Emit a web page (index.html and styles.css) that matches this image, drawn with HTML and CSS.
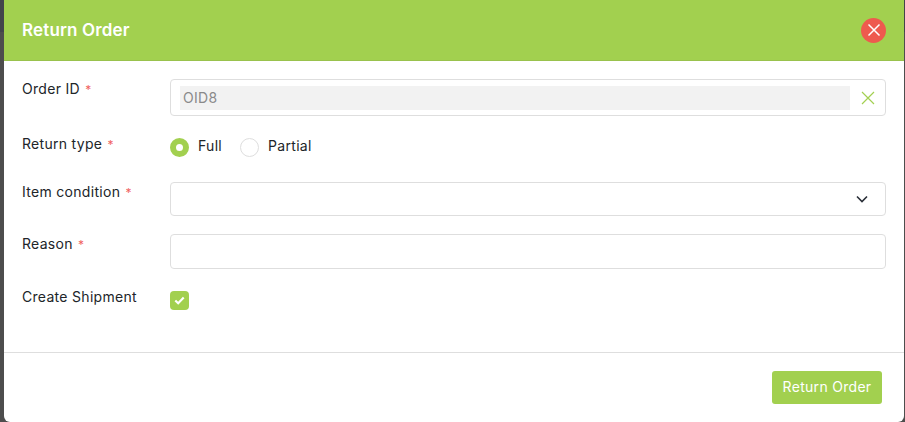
FILE: index.html
```html
<!DOCTYPE html>
<html lang="en">
<head>
  <meta charset="UTF-8" />
  <title>Return Order</title>
  <link rel="stylesheet" href="styles.css">
</head>
<body>
  <div class="modal">
    <div class="modal-header">
      <h1>Return Order</h1>
      <button class="close-btn" aria-label="Close">
        <svg width="14" height="14" viewBox="0 0 14 14"><path d="M1.5 1.5l11 11M12.5 1.5l-11 11" stroke="#fff" stroke-width="1.5" fill="none"/></svg>
      </button>
    </div>

    <div class="modal-body">
      <div class="form-row">
        <label class="field-label">Order ID <span class="req">*</span></label>
        <div class="text-box order-box">
          <div class="order-value">OID8</div>
          <svg class="clear-icon" width="14" height="14" viewBox="0 0 14 14"><path d="M1 1l12 12M13 1L1 13" stroke="#a3d051" stroke-width="1.2" fill="none"/></svg>
        </div>
      </div>

      <div class="form-row">
        <label class="field-label">Return type <span class="req">*</span></label>
        <div class="radio-group">
          <div class="radio-item"><span class="radio checked"></span><span class="radio-text">Full</span></div>
          <div class="radio-item"><span class="radio"></span><span class="radio-text">Partial</span></div>
        </div>
      </div>

      <div class="form-row">
        <label class="field-label">Item condition <span class="req">*</span></label>
        <div class="text-box select-box">
          <svg width="12" height="8" viewBox="0 0 12 8"><path d="M1 1.5l5 5 5-5" stroke="#2a2f38" stroke-width="1.6" fill="none"/></svg>
        </div>
      </div>

      <div class="form-row">
        <label class="field-label">Reason <span class="req">*</span></label>
        <div class="text-box reason-box"></div>
      </div>

      <div class="form-row">
        <label class="field-label">Create Shipment</label>
        <div class="check-wrap">
          <span class="checkbox">
            <svg width="11" height="9" viewBox="0 0 11 9"><path d="M1.3 4.5l2.9 2.7 5.5-5.6" stroke="#fff" stroke-width="2.2" fill="none"/></svg>
          </span>
        </div>
      </div>
    </div>

    <div class="modal-footer">
      <button class="submit-btn">Return Order</button>
    </div>
  </div>
</body>
</html>
```
FILE: styles.css
```css
html, body {
  height: 100%;
}

body {
  margin: 0;
  padding: 0 1px 0 4px;
  box-sizing: border-box;
  overflow: hidden;
  background: linear-gradient(#42444b 32px, #4d4d4d 32px);
  color: #212529;
  font-family: Inter, "Liberation Sans", sans-serif;
  font-size: 14px;
  letter-spacing: 0.3px;
}

.modal {
  height: 422px;
  display: flex;
  flex-direction: column;
  background: #fff;
  border-radius: 0 0 6px 6px;
  overflow: hidden;
}

.modal-header {
  height: 61px;
  flex: none;
  box-sizing: border-box;
  display: flex;
  align-items: center;
  justify-content: space-between;
  padding: 0 18px;
  background: #a2d04f;
  border-bottom: 1px solid #99c24d;
}

.modal-header h1 {
  margin: 0;
  font-size: 17px;
  font-weight: 600;
  letter-spacing: 0.15px;
  color: #fff;
}

.close-btn {
  width: 25px;
  height: 25px;
  padding: 0;
  border: none;
  border-radius: 50%;
  background: #ee5a4e;
  display: flex;
  align-items: center;
  justify-content: center;
}

.modal-body {
  flex: 1;
  display: flex;
  flex-direction: column;
  gap: 18px;
  padding: 18px 18px 0;
}

.form-row {
  display: flex;
}

.field-label {
  width: 148px;
  flex: none;
  line-height: 20px;
}

.req {
  color: #f0625f;
  font-size: 12px;
  margin-left: 1px;
}

.text-box {
  flex: 1;
  box-sizing: border-box;
  border: 1px solid #dedede;
  border-radius: 4px;
  background: #fff;
}

.order-box {
  height: 37px;
  display: flex;
  align-items: center;
  padding: 0 10px 0 9px;
}

.order-value {
  flex: 1;
  height: 24px;
  line-height: 24px;
  padding-left: 3px;
  margin-right: 11px;
  background: #f2f2f2;
  color: #8a8a8a;
}

.select-box {
  height: 34px;
  display: flex;
  align-items: center;
  justify-content: flex-end;
  padding-right: 17px;
}

.reason-box {
  height: 35px;
}

.radio-group {
  height: 30px;
  display: flex;
  gap: 18px;
  padding-top: 3px;
  box-sizing: border-box;
}

.radio-item {
  display: flex;
  align-items: center;
  gap: 9px;
  height: 20px;
  line-height: 20px;
}

.radio-text {
  margin-top: -2px;
}

.radio {
  width: 19px;
  height: 19px;
  box-sizing: border-box;
  border: 1px solid #dedede;
  border-radius: 50%;
  background: #fff;
}

.radio.checked {
  border: 6px solid #a2d04f;
}

.check-wrap {
  padding-top: 4px;
}

.checkbox {
  width: 19px;
  height: 19px;
  border-radius: 4px;
  background: #a2d04f;
  display: flex;
  align-items: center;
  justify-content: center;
}

.modal-footer {
  flex: none;
  display: flex;
  justify-content: flex-end;
  padding: 18px 22px 18px 0;
  border-top: 1px solid #dedede;
}

.submit-btn {
  width: 110px;
  height: 33px;
  padding: 0 0 2px;
  border: none;
  border-radius: 3px;
  background: #a2d04f;
  color: #fff;
  font-family: inherit;
  font-size: 14px;
  letter-spacing: 0.3px;
}
```
